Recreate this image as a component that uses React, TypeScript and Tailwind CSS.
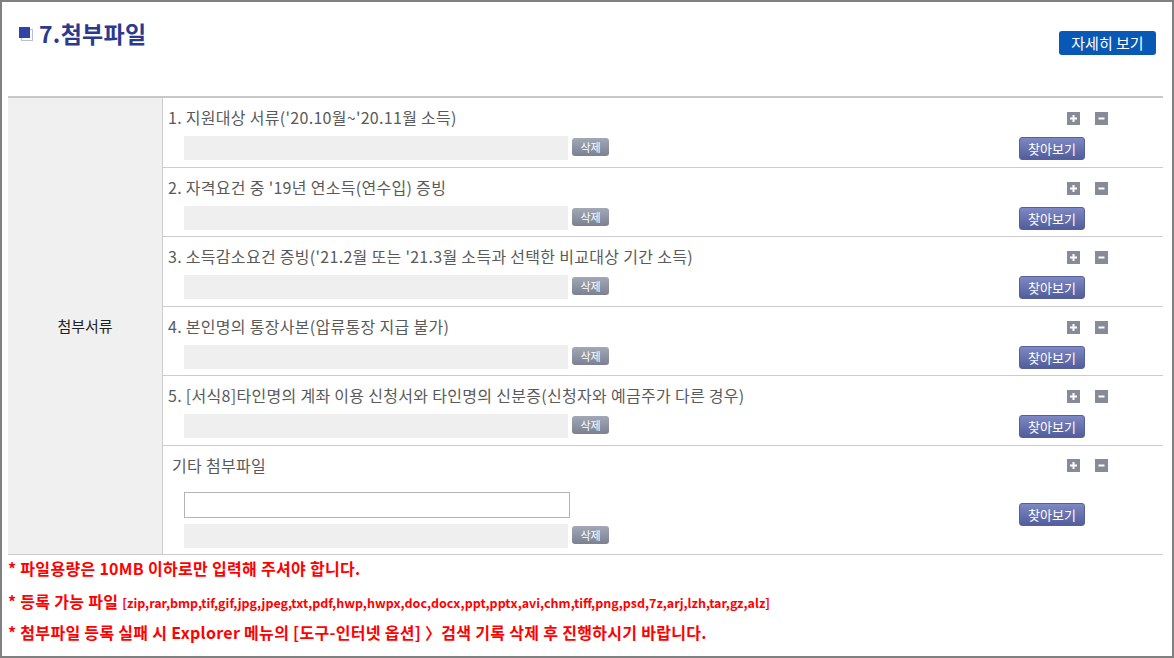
const FONT = { fontFamily: '"Noto Sans CJK KR", "Noto Sans", sans-serif' }

type Row = { label: string; h: string }

const rows: Row[] = [
  { label: "1. 지원대상 서류('20.10월~'20.11월 소득)", h: 'h-[70px]' },
  { label: "2. 자격요건 중 '19년 연소득(연수입) 증빙", h: 'h-[69px]' },
  { label: "3. 소득감소요건 증빙('21.2월 또는 '21.3월 소득과 선택한 비교대상 기간 소득)", h: 'h-[70px]' },
  { label: '4. 본인명의 통장사본(압류통장 지급 불가)', h: 'h-[69px]' },
  { label: '5. [서식8]타인명의 계좌 이용 신청서와 타인명의 신분증(신청자와 예금주가 다른 경우)', h: 'h-[70px]' },
]

function PlusMinus() {
  return (
    <div className="flex gap-[15px]">
      <svg width="13" height="13" viewBox="0 0 13 13" className="block">
        <rect width="13" height="13" fill="#868b97" />
        <path d="M3 6.5h7M6.5 3v7" stroke="#fff" strokeWidth="2" />
      </svg>
      <svg width="13" height="13" viewBox="0 0 13 13" className="block">
        <rect width="13" height="13" fill="#868b97" />
        <path d="M3.5 6.5h6" stroke="#fff" strokeWidth="2" />
      </svg>
    </div>
  )
}

function DelButton() {
  return (
    <button className="ml-[4px] mt-[2px] block h-[18px] w-[37px] rounded-[3px] bg-gradient-to-b from-[#a3a8b6] to-[#7c8192] text-[11px] leading-[18px] text-white">
      삭제
    </button>
  )
}

function FindButton({ className = '' }: { className?: string }) {
  return (
    <button
      className={`ml-auto mr-[78px] block h-[23px] w-[66px] rounded-[3px] border border-[#56619a] bg-gradient-to-b from-[#7d88c4] to-[#525e9c] text-[13px] leading-[21px] text-white ${className}`}
    >
      찾아보기
    </button>
  )
}

function FileRow({ row }: { row: Row }) {
  return (
    <div className={`flex flex-col border-b border-[#cccccc] ${row.h}`}>
      <div className="flex h-[38px] items-start pl-[5px]">
        <p className="pt-[8px] text-[16px] leading-[22px] tracking-[0.3px] text-[#5a5a5a]">{row.label}</p>
        <div className="ml-auto mr-[55px] mt-[14px]">
          <PlusMinus />
        </div>
      </div>
      <div className="flex items-start pl-[21px]">
        <div className="h-[24px] w-[384px] bg-[#efefef]" />
        <DelButton />
        <FindButton className="mt-[1px]" />
      </div>
    </div>
  )
}

export default function App() {
  return (
    <div className="box-border h-[658px] w-[1174px] border-2 border-[#808080] bg-white" style={FONT}>
      <div className="flex h-[94px] items-start pl-[16px] pr-[16px]">
        <div className="mt-[16px] flex items-center gap-[6px]">
          <svg width="15" height="15" viewBox="0 0 15 15" className="block">
            <rect x="3.5" y="3.5" width="11" height="11" fill="#ffffff" stroke="#b8bfd8" strokeWidth="1" />
            <rect x="1" y="1" width="11" height="11" fill="#2f44a6" />
          </svg>
          <h1 className="text-[23px] font-bold leading-[30px] tracking-[0.3px] text-[#2a3a8e]">7.첨부파일</h1>
        </div>
        <button className="ml-auto mt-[29px] block h-[24px] w-[97px] rounded-[3px] bg-[#0958b5] text-[15px] leading-[24px] text-white">
          자세히 보기
        </button>
      </div>

      <div className="ml-[6px] mr-[9px] flex border-t-2 border-[#c8c8c8]">
        <div className="flex w-[155px] items-center justify-center border-b border-r border-[#cccccc] bg-[#f0f0f0]">
          <span className="text-[15px] text-[#222222]">첨부서류</span>
        </div>
        <div className="flex flex-1 flex-col">
          {rows.map((r) => (
            <FileRow key={r.label} row={r} />
          ))}
          <div className="flex h-[109px] flex-col border-b border-[#cccccc]">
            <div className="flex h-[46px] items-start pl-[9px]">
              <p className="pt-[8px] text-[16px] leading-[22px] tracking-[0.3px] text-[#5a5a5a]">기타 첨부파일</p>
              <div className="ml-auto mr-[55px] mt-[13px]">
                <PlusMinus />
              </div>
            </div>
            <div className="flex items-start pl-[21px]">
              <div className="flex flex-col gap-[6px]">
                <input className="block h-[26px] w-[386px] border border-[#b4b4b4] bg-white outline-none" />
                <div className="flex items-start">
                  <div className="h-[24px] w-[384px] bg-[#efefef]" />
                  <DelButton />
                </div>
              </div>
              <FindButton className="mt-[11px]" />
            </div>
          </div>
        </div>
      </div>

      <div className="pl-[6px] font-bold tracking-[0.3px] text-[#ff0000]">
        <p className="h-[26px] text-[16px] leading-[26px]">* 파일용량은 10MB 이하로만 입력해 주셔야 합니다.</p>
        <p className="h-[40px] text-[16px] leading-[40px]">
          * 등록 가능 파일{' '}
          <span className="text-[12.5px] tracking-normal">
            [zip,rar,bmp,tif,gif,jpg,jpeg,txt,pdf,hwp,hwpx,doc,docx,ppt,pptx,avi,chm,tiff,png,psd,7z,arj,lzh,tar,gz,alz]
          </span>
        </p>
        <p className="h-[22px] text-[16px] leading-[22px]">
          * 첨부파일 등록 실패 시 Explorer 메뉴의 [도구-인터넷 옵션] 〉검색 기록 삭제 후 진행하시기 바랍니다.
        </p>
      </div>
    </div>
  )
}
